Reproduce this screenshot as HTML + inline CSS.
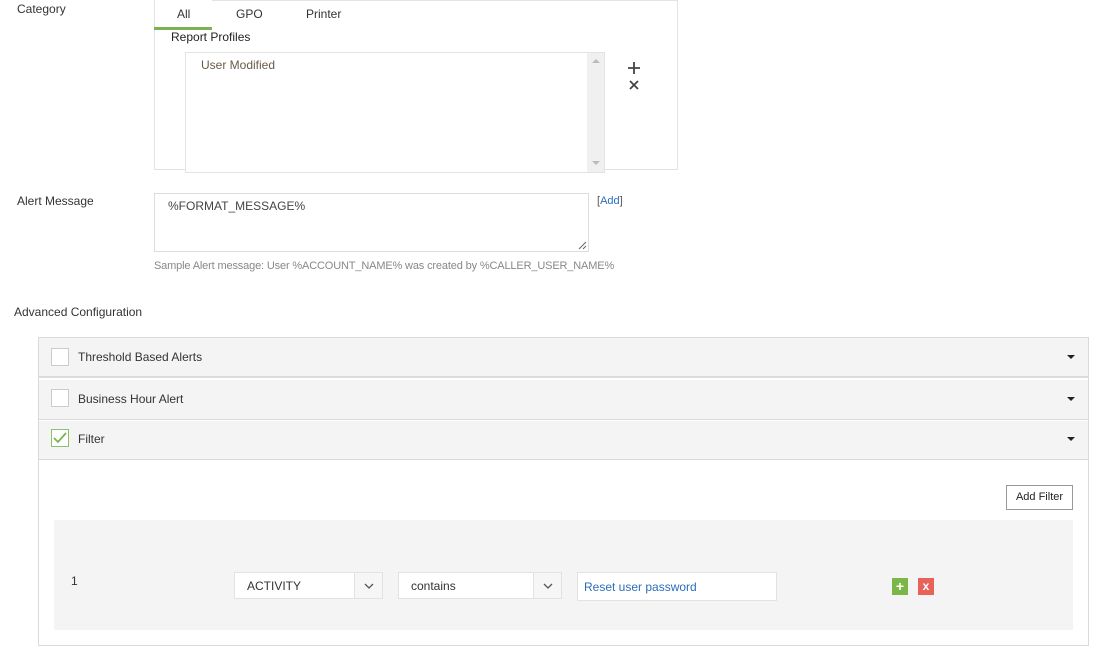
<!DOCTYPE html>
<html><head><style>
*{box-sizing:border-box;margin:0;padding:0}
body{width:1095px;height:646px;background:#fff;font-family:"Liberation Sans",sans-serif;font-size:12px;color:#333;position:relative;overflow:hidden}
.a{position:absolute}
.cb{position:absolute;width:18px;height:18px;border:1px solid #ccc;background:#fff}
.car{position:absolute;width:0;height:0;border-left:4px solid transparent;border-right:4px solid transparent;border-top:4px solid #222}
.sel{position:absolute;height:27px;border:1px solid #e2e2e2;background:#fff}
.sel .d{position:absolute;right:0;top:0;bottom:0;width:28px;border-left:1px solid #e2e2e2;background:#f6f6f6}
</style></head><body>
<div class="a" style="left:17px;top:2px">Category</div>
<div class="a" style="left:154px;top:0;width:524px;height:170px;border:1px solid #e3e3e3;border-top:none"></div>
<div class="a" style="left:212px;top:0;width:466px;border-top:1px solid #e3e3e3"></div>
<div class="a" style="left:177px;top:7px">All</div>
<div class="a" style="left:236px;top:7px">GPO</div>
<div class="a" style="left:306px;top:7px">Printer</div>
<div class="a" style="left:154px;top:27px;width:58px;height:3px;background:#7cb352"></div>
<div class="a" style="left:171px;top:30px;color:#222">Report Profiles</div>
<div class="a" style="left:185px;top:52px;width:420px;height:121px;border:1px solid #e3e3e3;background:#fff"></div>
<div class="a" style="left:587px;top:53px;width:17px;height:119px;background:#f0f0f0"></div>
<div class="a" style="left:592px;top:59px;border-left:4px solid transparent;border-right:4px solid transparent;border-bottom:4px solid #bbb"></div>
<div class="a" style="left:592px;top:161px;border-left:4px solid transparent;border-right:4px solid transparent;border-top:4px solid #bbb"></div>
<div class="a" style="left:201px;top:58px;color:#6a5a4a">User Modified</div>
<svg class="a" style="left:627px;top:61px" width="14" height="30"><path d="M7 1V13M1 7H13" stroke="#444" stroke-width="1.8"/><path d="M3 20L11 28M11 20L3 28" stroke="#444" stroke-width="1.8"/></svg>
<div class="a" style="left:17px;top:194px">Alert Message</div>
<div class="a" style="left:154px;top:193px;width:435px;height:59px;border:1px solid #ddd"></div>
<svg class="a" style="left:578px;top:241px" width="9" height="9"><path d="M1 8L8 1M5 8L8 5" stroke="#666" stroke-width="1"/></svg>
<div class="a" style="left:168px;top:199px;color:#444">%FORMAT_MESSAGE%</div>
<div class="a" style="left:597px;top:195px;font-size:11px;color:#555">[<span style="color:#2a6ebb">Add</span>]</div>
<div class="a" style="left:154px;top:260px;font-size:11px;color:#888;letter-spacing:-0.15px">Sample Alert message: User %ACCOUNT_NAME% was created by %CALLER_USER_NAME%</div>
<div class="a" style="left:14px;top:305px">Advanced Configuration</div>
<div class="a" style="left:38px;top:337px;width:1051px;height:309px;border:1px solid #d9d9d9;background:#fff"></div>
<div class="a" style="left:39px;top:338px;width:1049px;height:40px;background:#f4f4f4;border-bottom:2px solid #d9dcdc"></div>
<div class="a" style="left:39px;top:380px;width:1049px;height:40px;background:#f4f4f4;border-bottom:1px solid #d9d9d9"></div>
<div class="a" style="left:39px;top:421px;width:1049px;height:39px;background:#f4f4f4;border-bottom:1px solid #d9d9d9"></div>
<div class="cb" style="left:51px;top:348px"></div><div class="a" style="left:78px;top:350px">Threshold Based Alerts</div><div class="car" style="left:1067px;top:355px"></div>
<div class="cb" style="left:51px;top:389px"></div><div class="a" style="left:78px;top:392px">Business Hour Alert</div><div class="car" style="left:1067px;top:397px"></div>
<div class="cb" style="left:51px;top:429px;border-color:#8cc06a"><svg width="16" height="16" style="position:absolute;left:0;top:0"><path d="M2 8 L6 12 L14 3" stroke="#7cb352" stroke-width="1.8" fill="none"/></svg></div><div class="a" style="left:78px;top:432px">Filter</div><div class="car" style="left:1067px;top:437px"></div>
<div class="a" style="left:1006px;top:485px;width:67px;height:25px;border:1px solid #999;background:#fff;font-size:11px;text-align:center;line-height:23px;color:#222">Add Filter</div>
<div class="a" style="left:54px;top:520px;width:1019px;height:110px;background:#f4f4f4"></div>
<div class="a" style="left:71px;top:574px">1</div>
<div class="sel" style="left:234px;top:572px;width:149px"><span class="a" style="left:12px;top:6px">ACTIVITY</span><div class="d"><svg width="28" height="25"><path d="M10 11 L14 15 L18 11" stroke="#555" stroke-width="1.3" fill="none"/></svg></div></div>
<div class="sel" style="left:398px;top:572px;width:164px"><span class="a" style="left:12px;top:6px">contains</span><div class="d"><svg width="28" height="25"><path d="M10 11 L14 15 L18 11" stroke="#555" stroke-width="1.3" fill="none"/></svg></div></div>
<div class="a" style="left:577px;top:572px;width:200px;height:29px;border:1px solid #e2e2e2;background:#fff"><span class="a" style="left:6px;top:7px;color:#2a6ebb">Reset user password</span></div>
<div class="a" style="left:892px;top:578px;width:16px;height:17px;background:#7ab648;color:#fff;font-weight:bold;text-align:center;line-height:17px;font-size:14px">+</div>
<div class="a" style="left:918px;top:578px;width:16px;height:17px;background:#e8625c;color:#fff;font-weight:bold;text-align:center;line-height:17px;font-size:12px">x</div>
</body></html>
